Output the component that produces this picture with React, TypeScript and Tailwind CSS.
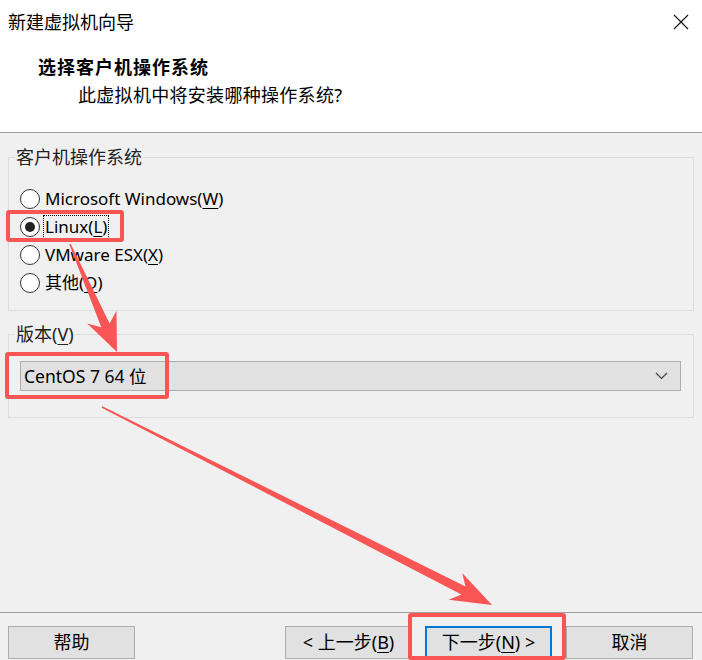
import React from 'react'

const FONT = "font-['Segoe_UI','Noto_Sans','Noto_Sans_CJK_SC',sans-serif]"

function arrow(x1: number, y1: number, x2: number, y2: number, headLen = 40, headHalf = 15, shaft = 4.5, notch = 9) {
  const dx = x2 - x1
  const dy = y2 - y1
  const len = Math.hypot(dx, dy)
  const ux = dx / len
  const uy = dy / len
  const nx = -uy
  const ny = ux
  const bx = x2 - ux * headLen
  const by = y2 - uy * headLen
  const sx = bx + ux * notch
  const sy = by + uy * notch
  const pts: [number, number][] = [
    [x1 + nx * 0.8, y1 + ny * 0.8],
    [sx + nx * shaft, sy + ny * shaft],
    [bx + nx * headHalf, by + ny * headHalf],
    [x2, y2],
    [bx - nx * headHalf, by - ny * headHalf],
    [sx - nx * shaft, sy - ny * shaft],
    [x1 - nx * 0.8, y1 - ny * 0.8],
  ]
  return pts.map(([x, y]) => `${x.toFixed(1)},${y.toFixed(1)}`).join(' ')
}

function Hot({ children }: { children: React.ReactNode }) {
  return <span className="underline underline-offset-[3px] decoration-1">{children}</span>
}

function Radio({ checked, focus, children }: { checked?: boolean; focus?: boolean; children: React.ReactNode }) {
  return (
    <div className="flex items-center h-[28px]">
      <span className="w-[20px] h-[20px] rounded-full border border-[#333] bg-white flex items-center justify-center shrink-0">
        {checked && <span className="w-[10px] h-[10px] rounded-full bg-[#222]" />}
      </span>
      <span className={`ml-[4px] px-[1px] leading-[22px] text-[17px] ${focus ? 'outline-1 outline-dotted outline-black' : ''}`}>
        {children}
      </span>
    </div>
  )
}

function Button({ children, focused }: { children: React.ReactNode; focused?: boolean }) {
  return (
    <button
      className={`w-[127px] h-[33px] bg-[#e1e1e1] flex items-center justify-center text-[18px] ${
        focused ? 'border-2 border-[#0078d7]' : 'border border-[#adadad]'
      }`}
    >
      {children}
    </button>
  )
}

export default function App() {
  return (
    <div className={`relative w-[702px] h-[660px] overflow-hidden bg-[#f0f0f0] text-black text-[18px] flex flex-col ${FONT}`}>
      <header className="h-[133px] shrink-0 bg-white border-b border-[#a0a0a0]">
        <div className="flex items-center justify-between h-[44px] pl-2 pr-[12px]">
          <span className="leading-[24px]">新建虚拟机向导</span>
          <svg width="16" height="16" viewBox="0 0 16 16" className="mr-[1px]">
            <path d="M1 1 L15 15 M15 1 L1 15" stroke="#111" strokeWidth="1.1" />
          </svg>
        </div>
        <h1 className="pl-[38px] mt-[10px] leading-[26px] font-bold tracking-[1px]">选择客户机操作系统</h1>
        <p className="pl-[78px] mt-[2px] leading-[26px] tracking-[0.3px]">此虚拟机中将安装哪种操作系统?</p>
      </header>

      <main className="flex-1 px-2">
        <fieldset className="mt-[13px] h-[165px] border border-[#dcdcdc]">
          <legend className="ml-[6px] px-[1px] leading-[22px] text-[#222]">客户机操作系统</legend>
          <div className="pl-[11px] pt-[17px]">
            <Radio>
              Microsoft Windows(<Hot>W</Hot>)
            </Radio>
            <Radio checked focus>
              Linux(<Hot>L</Hot>)
            </Radio>
            <Radio>
              VMware ESX(<Hot>X</Hot>)
            </Radio>
            <Radio>
              其他(<Hot>O</Hot>)
            </Radio>
          </div>
        </fieldset>

        <fieldset className="mt-[12px] border border-[#dcdcdc]">
          <legend className="ml-[6px] px-[1px] leading-[22px] text-[#222]">
            版本(<Hot>V</Hot>)
          </legend>
          <div className="pl-[11px] pr-[12px] pt-[16px] pb-[26px]">
            <div className="h-[30px] bg-[#e1e1e1] border border-[#adadad] flex items-center justify-between pl-[3px] pr-[12px]">
              <span className="text-[17.5px]">CentOS 7 64 位</span>
              <svg width="13" height="8" viewBox="0 0 13 8">
                <polyline points="1,1 6.5,6.5 12,1" fill="none" stroke="#444" strokeWidth="1.2" />
              </svg>
            </div>
          </div>
        </fieldset>
      </main>

      <footer className="h-[48px] shrink-0 border-t border-[#a0a0a0] flex justify-between pt-[13px] pl-2 pr-[9px]">
        <Button>帮助</Button>
        <div className="flex gap-[13px]">
          <Button>
            &lt; 上一步(<Hot>B</Hot>)
          </Button>
          <Button focused>
            下一步(<Hot>N</Hot>) &gt;
          </Button>
          <div className="ml-[1px]">
            <Button>取消</Button>
          </div>
        </div>
      </footer>

      {/* annotation overlays */}
      <div className="absolute left-[6px] top-[210px] w-[118px] h-[32px] border-[4px] border-[#f95555] rounded-[3px] pointer-events-none" />
      <div className="absolute left-[5px] top-[352px] w-[164px] h-[47px] border-[4px] border-[#f95555] rounded-[3px] pointer-events-none" />
      <div className="absolute left-[408px] top-[613px] w-[158px] h-[47px] border-[4px] border-[#f95555] rounded-[3px] pointer-events-none" />
      <svg className="absolute inset-0 pointer-events-none" width="702" height="660" viewBox="0 0 702 660">
        <polygon points={arrow(70, 244, 117, 352, 38, 16, 4.5, 9)} fill="#f95555" />
        <polygon points={arrow(102, 407, 492, 605, 41, 15, 4.5, 9)} fill="#f95555" />
      </svg>
    </div>
  )
}
